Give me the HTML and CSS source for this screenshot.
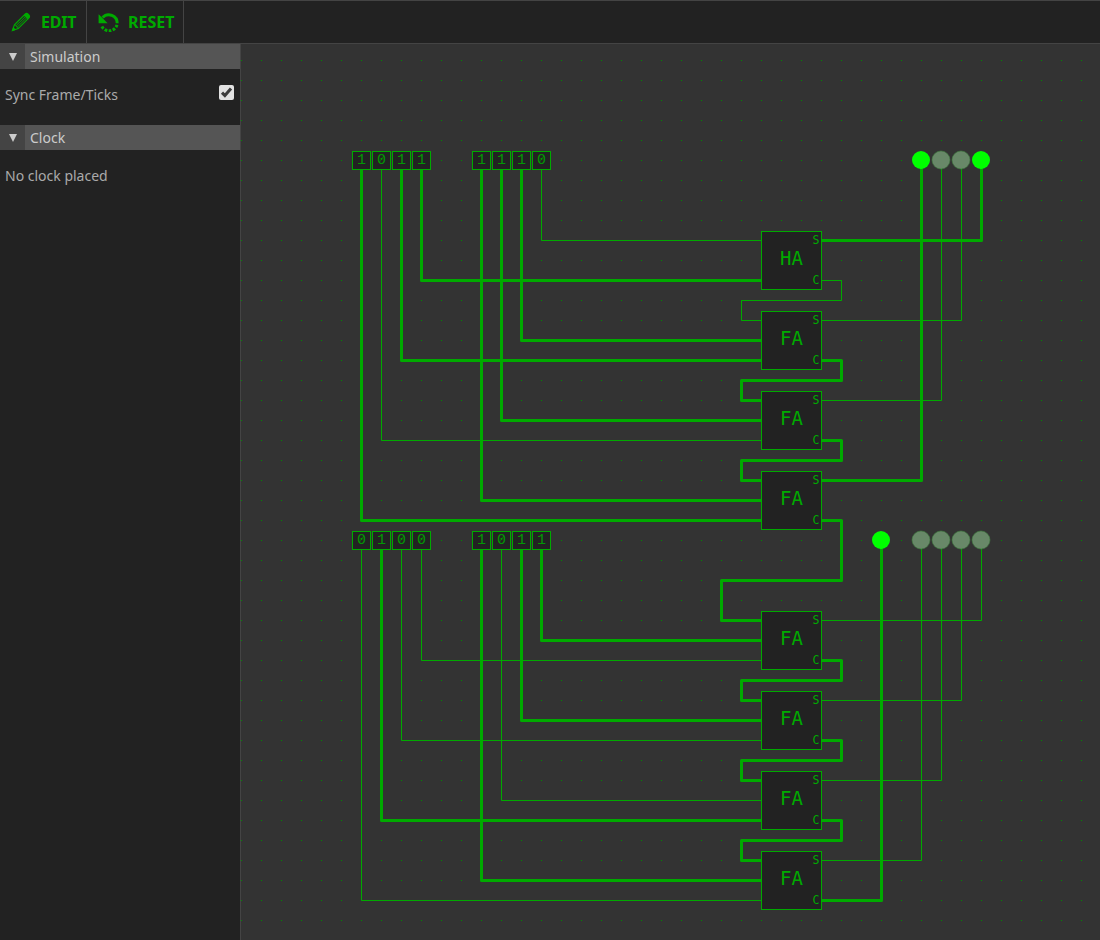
FILE: index.html
```html
<!DOCTYPE html>
<html lang="en">
<head>
<meta charset="utf-8">
<title>Logic simulator</title>
<link rel="stylesheet" href="styles.css">
</head>
<body>
<header class="toolbar">
  <button class="tool tool-edit">
    <svg class="icon" width="20" height="20" viewBox="0 0 20 20"><path d="M1.4 18.6L3.4 12.8L13.2 3L17 6.8L7.2 16.6Z" fill="none" stroke="#00aa00" stroke-width="1.2"/><path d="M.8 19.2L2.2 15L5 17.8ZM12.8 2.6L14.5 1Q16 .2 17.8 2.1Q19.8 4.1 19 5.5L17.4 7.2Z" fill="#00aa00"/><path d="M3.6 13L5.2 13.4L5.4 14.8L6.8 15L7 16.6M5.4 13.4L14.6 4.4M6.6 14.8L15.8 5.6" fill="none" stroke="#00aa00" stroke-width=".9"/></svg>
    <span>EDIT</span>
  </button>
  <button class="tool tool-reset">
    <svg class="icon" width="22" height="20" viewBox="0 0 22 20"><path d="M4.6 5.6A8.4 8.4 0 0 1 19.2 11.3" fill="none" stroke="#00aa00" stroke-width="3"/><path d="M.6 2.2V11.2H9.6L6.7 8.2L3.2 4.8Z" fill="#00aa00"/><path d="M19 12.8A8.2 8.2 0 0 1 3.4 13.4" fill="none" stroke="#00aa00" stroke-width="3" stroke-dasharray="2.7 1.4"/></svg>
    <span>RESET</span>
  </button>
</header>
<main class="workspace">
  <aside class="sidebar">
    <section class="panel">
      <h2 class="panel-head"><span class="fold"><i class="arrow"></i></span><span class="panel-title">Simulation</span></h2>
      <label class="row"><span>Sync Frame/Ticks</span><span class="check"><svg width="15" height="15" viewBox="0 0 15 15"><path d="M3 7.6L5.9 10.6L12 3.6" fill="none" stroke="#3c3c3c" stroke-width="3"/></svg></span></label>
    </section>
    <section class="panel">
      <h2 class="panel-head"><span class="fold"><i class="arrow"></i></span><span class="panel-title">Clock</span></h2>
      <p class="row">No clock placed</p>
    </section>
  </aside>
  <svg class="board" width="859" height="896" viewBox="241 44 859 896">
    <defs>
      <pattern id="grid" x="241" y="40" width="20" height="20" patternUnits="userSpaceOnUse"><rect class="dot" width="1" height="1"/></pattern>
      <g id="chip"><rect class="box" x=".5" y=".5" width="60" height="58"/><text class="pin" x="55" y="13">S</text><text class="pin" x="55" y="53">C</text></g>
      <rect id="cell" class="box" x=".5" y=".5" width="18" height="18"/>
      <circle id="lamp" r="9"/>
    </defs>
    <rect x="241" y="44" width="859" height="896" fill="url(#grid)"/>
    <g class="wire off">
      <path d="M381.5 170V440.5H761M541.5 170V240.5H761M822 280.5H841.5V300.5H741.5V320.5H761M822 320.5H961.5V168M822 400.5H941.5V168"/>
      <path d="M361.5 550V900.5H761M401.5 550V740.5H761M421.5 550V660.5H761M501.5 550V800.5H761"/>
      <path d="M822 620.5H981.5V548M822 700.5H961.5V548M822 780.5H941.5V548M822 860.5H921.5V548"/>
    </g>
    <g class="wire on">
      <path d="M361.5 170V520.5H761M401.5 170V360.5H761M421.5 170V280.5H761M481.5 170V500.5H761M501.5 170V420.5H761M521.5 170V340.5H761"/>
      <path d="M822 240.5H981.5V168M822 480.5H921.5V168M822 360.5H841.5V380.5H741.5V400.5H761M822 440.5H841.5V460.5H741.5V480.5H761M822 520.5H841.5V580.5H721.5V620.5H761"/>
      <path d="M381.5 550V820.5H761M481.5 550V880.5H761M521.5 550V720.5H761M541.5 550V640.5H761M822 660.5H841.5V680.5H741.5V700.5H761M822 740.5H841.5V760.5H741.5V780.5H761M822 820.5H841.5V840.5H741.5V860.5H761M822 900.5H881.5V548"/>
    </g>
    <g>
      <use href="#chip" x="761" y="231"/><use href="#chip" x="761" y="311"/><use href="#chip" x="761" y="391"/><use href="#chip" x="761" y="471"/>
      <use href="#chip" x="761" y="611"/><use href="#chip" x="761" y="691"/><use href="#chip" x="761" y="771"/><use href="#chip" x="761" y="851"/>
    </g>
    <g class="name">
      <text x="791.5" y="265">HA</text><text x="791.5" y="345">FA</text><text x="791.5" y="425">FA</text><text x="791.5" y="505">FA</text>
      <text x="791.5" y="645">FA</text><text x="791.5" y="725">FA</text><text x="791.5" y="805">FA</text><text x="791.5" y="885">FA</text>
    </g>
    <g>
      <use href="#cell" x="352" y="151"/><use href="#cell" x="372" y="151"/><use href="#cell" x="392" y="151"/><use href="#cell" x="412" y="151"/>
      <use href="#cell" x="472" y="151"/><use href="#cell" x="492" y="151"/><use href="#cell" x="512" y="151"/><use href="#cell" x="532" y="151"/>
      <use href="#cell" x="352" y="531"/><use href="#cell" x="372" y="531"/><use href="#cell" x="392" y="531"/><use href="#cell" x="412" y="531"/>
      <use href="#cell" x="472" y="531"/><use href="#cell" x="492" y="531"/><use href="#cell" x="512" y="531"/><use href="#cell" x="532" y="531"/>
    </g>
    <g class="bit">
      <text x="361.5" y="164">1</text><text x="381.5" y="164">0</text><text x="401.5" y="164">1</text><text x="421.5" y="164">1</text>
      <text x="481.5" y="164">1</text><text x="501.5" y="164">1</text><text x="521.5" y="164">1</text><text x="541.5" y="164">0</text>
      <text x="361.5" y="544">0</text><text x="381.5" y="544">1</text><text x="401.5" y="544">0</text><text x="421.5" y="544">0</text>
      <text x="481.5" y="544">1</text><text x="501.5" y="544">0</text><text x="521.5" y="544">1</text><text x="541.5" y="544">1</text>
    </g>
    <path class="slash" d="M379.2 162.8L383.8 155.8M539.2 162.8L543.8 155.8M359.2 542.8L363.8 535.8M399.2 542.8L403.8 535.8M419.2 542.8L423.8 535.8M499.2 542.8L503.8 535.8"/>
    <g class="lamp-on"><use href="#lamp" x="921" y="160"/><use href="#lamp" x="981" y="160"/><use href="#lamp" x="881" y="540"/></g>
    <g class="lamp-off">
      <use href="#lamp" x="941" y="160"/><use href="#lamp" x="961" y="160"/>
      <use href="#lamp" x="921" y="540"/><use href="#lamp" x="941" y="540"/><use href="#lamp" x="961" y="540"/><use href="#lamp" x="981" y="540"/>
    </g>
  </svg>
</main>
</body>
</html>
```
FILE: styles.css
```css
* { box-sizing: border-box; }
body { margin: 0; width: 1100px; height: 940px; overflow: hidden; background: #333; color: #aaa; font-family: "Noto Sans", "Open Sans", sans-serif; font-size: 14px; }
.toolbar { display: flex; height: 44px; background: #222; border-top: 1px solid #444; border-bottom: 1px solid #444; }
.tool { display: flex; align-items: center; gap: 10px; height: 42px; padding: 0 9px 0 11px; background: none; border: 0; border-right: 1px solid #444; color: #0a0; font: bold 16px "Noto Sans", "Open Sans", sans-serif; }
.tool-edit { width: 87px; letter-spacing: -.2px; }
.tool-reset { width: 97px; gap: 8px; }
.icon { display: block; flex: none; }
.workspace { display: flex; height: 896px; }
.sidebar { width: 241px; flex: none; background: #222; border-right: 1px solid #444; }
.panel { height: 81px; }
.panel-head { display: flex; height: 25px; margin: 0; background: #555; color: #ccc; font-size: 14px; font-weight: 400; line-height: 25px; }
.fold { display: flex; align-items: center; justify-content: center; width: 25px; background: #444; }
.arrow { width: 0; height: 0; border: 4.5px solid transparent; border-top: 8px solid #ccc; border-bottom: 0; }
.panel-title { padding-left: 5px; }
.row { display: flex; align-items: center; justify-content: space-between; height: 51px; margin: 0; padding: 0 6px 0 5px; }
.check { width: 15px; height: 15px; margin-top: -4px; background: #e2e2e2; border-radius: 2px; }
.check svg { display: block; }
.board { display: block; flex: none; }
.dot { fill: #008c00; }
.wire { fill: none; stroke: #0a0; stroke-linejoin: round; }
.off { stroke-width: 1; }
.on { stroke-width: 3; }
.box { fill: #222; stroke: #0a0; stroke-width: 1; }
text { fill: #0a0; text-anchor: middle; }
.name { font: 20px "DejaVu Sans Mono", monospace; font-size: 19px; }
.pin { font: 12px "DejaVu Sans Mono", monospace; font-size: 11.5px; }
.bit { font: 15px "Liberation Mono", monospace; opacity: .85; }
.slash { stroke: #0a0; stroke-width: .8; opacity: .65; }
.lamp-on { fill: #0f0; }
.lamp-off { fill: #688868; }
.lamp-off use { stroke: #408040; stroke-width: .6; }
```
